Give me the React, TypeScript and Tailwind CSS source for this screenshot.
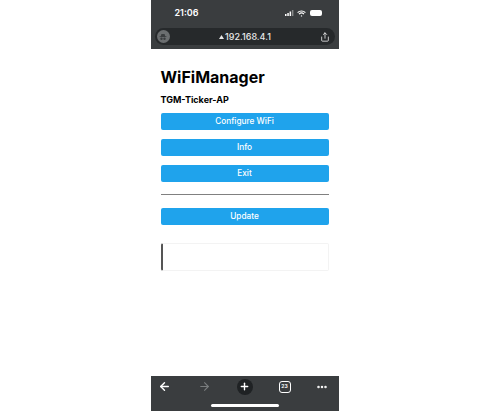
import { Share, Plus, ArrowLeft, ArrowRight, Ellipsis } from 'lucide-react'

const buttons = ['Configure WiFi', 'Info', 'Exit']

function MenuButton({ label }: { label: string }) {
  return (
    <button className="block w-full h-[17px] rounded-[2px] bg-[#1fa3ec] text-white text-[8.25px] leading-[17px] font-medium">
      {label}
    </button>
  )
}

export default function App() {
  return (
    <div className="w-[490px] h-[411px] bg-white flex justify-center font-['Inter',sans-serif] overflow-hidden">
      <div className="w-[188px] h-full ml-[-1px] flex flex-col">
        {/* Top: status bar + url bar */}
        <div className="h-[49px] bg-[#3a3d3f] shrink-0 flex flex-col">
          <div className="h-[28px] pb-[2px] flex items-center justify-between pl-[24px] pr-[17px] text-white">
            <span className="text-[9px] font-semibold">21:06</span>
            <div className="flex items-center gap-[3px]">
              <svg width="9" height="6" viewBox="0 0 9 6" fill="currentColor">
                <rect x="0" y="4" width="1.5" height="2" />
                <rect x="2.3" y="3" width="1.5" height="3" />
                <rect x="4.6" y="1.5" width="1.5" height="4.5" />
                <rect x="6.9" y="0" width="1.5" height="6" opacity="0.4" />
              </svg>
              <svg width="9" height="7" viewBox="0 0 9 7" fill="none" stroke="currentColor" strokeWidth="1.2">
                <path d="M0.6 2.6a5.6 5.6 0 0 1 7.8 0M2 4.1a3.6 3.6 0 0 1 5 0" />
                <circle cx="4.5" cy="5.9" r="0.7" fill="currentColor" stroke="none" />
              </svg>
              <span className="w-[12px] h-[6px] rounded-[2px] bg-white ml-[1px]" />
            </div>
          </div>
          <div className="mx-[4px] h-[17px] rounded-[9px] bg-[#26292b] flex items-center px-[2px] text-white">
            <span className="w-[13px] h-[13px] rounded-full bg-[#6b6e70] flex items-center justify-center shrink-0">
              <svg width="8" height="8" viewBox="0 0 8 8" fill="#3a3d3f">
                <path d="M2.4 1h3.2l.6 2.2H7.4v.9H.6v-.9h1.2z" />
                <circle cx="2.5" cy="5.7" r="1.2" />
                <circle cx="5.5" cy="5.7" r="1.2" />
              </svg>
            </span>
            <div className="flex-1 flex items-center justify-center gap-[1px] pl-[1px] text-[9px] font-medium text-[#e8e8e8]">
              <svg width="5" height="4" viewBox="0 0 5 4" fill="currentColor">
                <path d="M2.5 0 5 4H0z" />
              </svg>
              192.168.4.1
            </div>
            <Share size={10} strokeWidth={1.8} className="mr-[3px] shrink-0" />
          </div>
        </div>

        {/* Page content */}
        <div className="flex-1 pt-[18px] px-[10px] text-black">
          <h1 className="text-[16px] leading-[20px] font-bold">WiFiManager</h1>
          <h3 className="mt-[7px] text-[9px] leading-[12px] font-bold">TGM-Ticker-AP</h3>
          <div className="mt-[7px] flex flex-col gap-[9px]">
            {buttons.map((b) => (
              <MenuButton key={b} label={b} />
            ))}
          </div>
          <hr className="mt-[12px] border-t border-[#808080]" />
          <div className="mt-[13px]">
            <MenuButton label="Update" />
          </div>
          <div className="mt-[18px] h-[28px] rounded-[2px] border border-[#f3f3f3] border-l-2 border-l-[#555555]" />
        </div>

        {/* Bottom toolbar */}
        <div className="h-[35px] bg-[#3a3d3f] shrink-0 flex flex-col text-white">
          <div className="h-[21px] flex items-center pl-[7px]">
            <ArrowLeft size={13} strokeWidth={2.6} />
            <ArrowRight size={13} strokeWidth={2} className="ml-[27px] text-[#7a7d7f]" />
            <span className="ml-[26px] w-[16px] h-[16px] rounded-full bg-[#1f2224] flex items-center justify-center">
              <Plus size={11} strokeWidth={3} />
            </span>
            <span className="ml-[26px] w-[12px] h-[12px] rounded-[3px] border border-white flex items-center justify-center text-[5px] font-bold">
              23
            </span>
            <Ellipsis size={12} strokeWidth={3} className="ml-[25px]" />
          </div>
          <div className="mt-[7px] mx-auto w-[68px] h-[3px] rounded-full bg-white" />
        </div>
      </div>
    </div>
  )
}
